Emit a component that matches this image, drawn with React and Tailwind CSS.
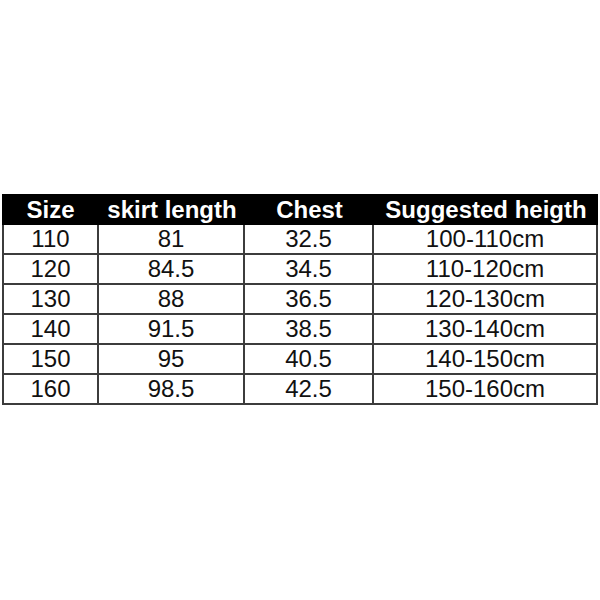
import React from 'react';

const rows = [
  ['110', '81', '32.5', '100-110cm'],
  ['120', '84.5', '34.5', '110-120cm'],
  ['130', '88', '36.5', '120-130cm'],
  ['140', '91.5', '38.5', '130-140cm'],
  ['150', '95', '40.5', '140-150cm'],
  ['160', '98.5', '42.5', '150-160cm'],
];

const headers = ['Size', 'skirt length', 'Chest', 'Suggested heigth'];

export default function App() {
  return (
    <div className="w-[600px] h-[600px] bg-white pt-[194px] px-[2px]" style={{ fontFamily: '"Liberation Sans", Arial, sans-serif' }}>
      <div className="w-[596px]">
        {/* header */}
        <div className="grid grid-cols-[97px_146px_129px_224px] bg-black text-white font-bold text-[24px] h-[31px] items-center">
          {headers.map(h => (
            <div key={h} className="text-center leading-none whitespace-nowrap pt-[1px]">{h}</div>
          ))}
        </div>
        <div className="border-l-2 border-[#3c3c3c]">
          {rows.map(r => (
            <div key={r[0]} className="grid grid-cols-[95px_146px_129px_224px] h-[30px] border-b-2 border-[#3c3c3c] text-[24px] text-[#111]">
              {r.map((c, i) => (
                <div key={i} className="flex items-center justify-center border-r-2 border-[#3c3c3c] leading-none">{c}</div>
              ))}
            </div>
          ))}
        </div>
      </div>
    </div>
  );
}
